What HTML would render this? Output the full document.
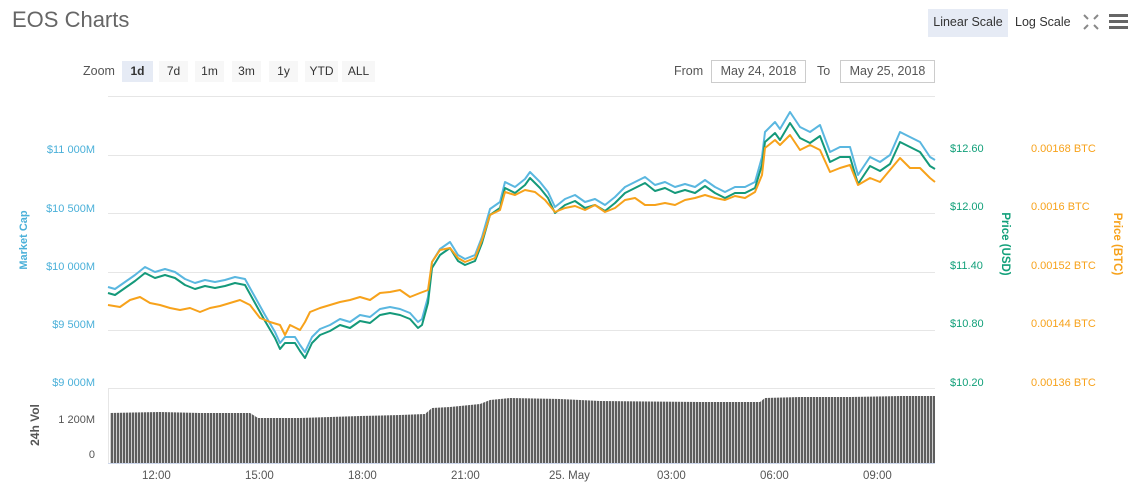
<!DOCTYPE html>
<html><head><meta charset="utf-8"><style>
body{margin:0;width:1141px;height:498px;background:#fff;font-family:"Liberation Sans",sans-serif;position:relative;overflow:hidden}
.a{position:absolute;white-space:nowrap}
.t{font-size:22px;color:#666;left:12px;top:7px}
.btn{position:absolute;top:61px;height:21px;line-height:21px;font-size:12px;color:#333;background:#f7f7f7;text-align:center}
.inp{position:absolute;top:60px;height:21px;border:1px solid #ccc;font-size:12.5px;color:#555;line-height:21px;text-align:center}
.l{font-size:11px;color:#4ab0d9;text-align:right;width:90px;left:5px}
.g{font-size:11px;color:#12a07a;left:950px}
.o{font-size:11px;color:#f7a21b;left:1031px}
.x{font-size:11.5px;color:#555;top:470px}
</style></head><body>
<div class="a t">EOS Charts</div>
<div class="a" style="left:83px;top:64px;font-size:12.5px;color:#555">Zoom</div>
<div class="btn" style="left:122px;width:31px;background:#e6ebf5;font-weight:bold">1d</div>
<div class="btn" style="left:159px;width:29px">7d</div>
<div class="btn" style="left:195px;width:29px">1m</div>
<div class="btn" style="left:232px;width:29px">3m</div>
<div class="btn" style="left:269px;width:29px">1y</div>
<div class="btn" style="left:305px;width:33px">YTD</div>
<div class="btn" style="left:342px;width:33px">ALL</div>
<div class="a" style="left:674px;top:64px;font-size:12.5px;color:#555">From</div>
<div class="inp" style="left:711px;width:93px">May 24, 2018</div>
<div class="a" style="left:817px;top:64px;font-size:12.5px;color:#555">To</div>
<div class="inp" style="left:840px;width:93px">May 25, 2018</div>
<div class="a" style="left:928px;top:9px;width:80px;height:28px;background:#e6ebf5;font-size:12.5px;color:#333;line-height:26px;text-align:center">Linear Scale</div>
<div class="a" style="left:1015px;top:15px;font-size:12.5px;color:#333">Log Scale</div>
<svg class="a" style="left:1082px;top:13px" width="18" height="18" viewBox="0 0 18 18" stroke="#888" stroke-width="2" fill="none"><path d="M2 2l4 4M16 2l-4 4M2 16l4-4M16 16l-4-4"/></svg>
<svg class="a" style="left:1109px;top:13px" width="19" height="17"><rect y="1" width="19" height="3" fill="#666"/><rect y="7" width="19" height="3" fill="#666"/><rect y="13" width="19" height="3" fill="#666"/></svg>

<div class="a l" style="top:144px">$11 000M</div>
<div class="a l" style="top:203px">$10 500M</div>
<div class="a l" style="top:261px">$10 000M</div>
<div class="a l" style="top:319px">$9 500M</div>
<div class="a l" style="top:377px">$9 000M</div>
<div class="a" style="left:-16px;top:234px;transform:rotate(-90deg);font-size:11px;color:#4ab0d9;font-weight:bold;width:80px;text-align:center">Market Cap</div>
<div class="a" style="left:-5px;top:418px;transform:rotate(-90deg);font-size:12px;color:#555;font-weight:bold;width:80px;text-align:center">24h Vol</div>
<div class="a" style="left:5px;width:90px;text-align:right;top:414px;font-size:11px;color:#555">1 200M</div>
<div class="a" style="left:5px;width:90px;text-align:right;top:449px;font-size:11px;color:#555">0</div>

<div class="a g" style="top:143px">$12.60</div>
<div class="a g" style="top:201px">$12.00</div>
<div class="a g" style="top:260px">$11.40</div>
<div class="a g" style="top:318px">$10.80</div>
<div class="a g" style="top:377px">$10.20</div>
<div class="a o" style="top:143px">0.00168 BTC</div>
<div class="a o" style="top:201px">0.0016 BTC</div>
<div class="a o" style="top:260px">0.00152 BTC</div>
<div class="a o" style="top:318px">0.00144 BTC</div>
<div class="a o" style="top:377px">0.00136 BTC</div>
<div class="a" style="left:965px;top:238px;transform:rotate(90deg);font-size:11.5px;color:#12a07a;font-weight:bold;width:80px;text-align:center">Price (USD)</div>
<div class="a" style="left:1077px;top:238px;transform:rotate(90deg);font-size:11.5px;color:#f7a21b;font-weight:bold;width:80px;text-align:center">Price (BTC)</div>

<div class="a x" style="left:142px">12:00</div>
<div class="a x" style="left:245px">15:00</div>
<div class="a x" style="left:348px">18:00</div>
<div class="a x" style="left:451px">21:00</div>
<div class="a x" style="left:549px">25. May</div>
<div class="a x" style="left:657px">03:00</div>
<div class="a x" style="left:760px">06:00</div>
<div class="a x" style="left:863px">09:00</div>

<svg class="a" style="left:0;top:0" width="1141" height="498">
<defs><pattern id="b" width="3" height="10" patternUnits="userSpaceOnUse"><rect width="2.3" height="10" fill="#5e5e5e"/></pattern></defs>
<g stroke="#e6e6e6" stroke-width="1">
<line x1="108" y1="96.5" x2="935" y2="96.5"/>
<line x1="108" y1="155.5" x2="935" y2="155.5"/>
<line x1="108" y1="213.5" x2="935" y2="213.5"/>
<line x1="108" y1="272.5" x2="935" y2="272.5"/>
<line x1="108" y1="330.5" x2="935" y2="330.5"/>
<line x1="108" y1="388.5" x2="935" y2="388.5"/>
<line x1="108.5" y1="388" x2="108.5" y2="463"/>
</g>
<polygon fill="url(#b)" points="110,463 110,413 160,412 200,413 250,413 258,418 300,418 330,417 360,416 400,415 425,414 432,408 450,407 480,404 490,400 510,398 560,399 600,401 700,402 760,402 765,398 800,397 850,397 900,396 935,396 935,463"/>
<line x1="108" y1="463.5" x2="935" y2="463.5" stroke="#ccd6eb"/>
<g fill="none" stroke-width="2" stroke-linejoin="round">
<polyline transform="translate(0,-3)" stroke="#5ab7e0" points="108,290 115,292 125,285 135,278 145,270 155,275 165,272 175,275 185,282 195,286 205,283 215,285 225,283 235,280 245,282 255,300 265,318 275,335 280,346 285,340 295,340 300,348 305,355 312,340 320,332 330,328 340,322 350,325 360,318 370,320 380,312 390,310 400,312 410,316 418,325 422,322 428,300 432,265 440,252 450,245 458,258 465,262 475,258 482,240 490,212 500,205 505,185 515,190 525,182 530,175 540,185 548,195 555,210 565,202 575,198 585,205 595,202 605,208 615,200 625,190 635,185 645,180 655,188 665,185 675,190 685,187 695,190 705,183 715,190 725,195 735,190 745,190 755,185 762,160 765,135 775,125 780,132 790,115 800,130 810,135 820,128 830,155 840,150 850,150 858,178 870,160 880,165 890,158 900,135 910,140 920,145 930,160 935,163"/>
<polyline stroke="#14997a" points="108,293 115,295 125,288 135,281 145,273 155,278 165,275 175,278 185,285 195,289 205,286 215,288 225,286 235,283 245,285 255,303 265,321 275,338 280,349 285,343 295,343 300,351 305,358 312,343 320,335 330,331 340,325 350,328 360,321 370,323 380,315 390,313 400,315 410,319 418,328 422,325 428,303 432,268 440,255 450,248 458,261 465,265 475,261 482,243 490,215 500,208 505,188 515,193 525,185 530,178 540,188 548,198 555,213 565,205 575,201 585,208 595,205 605,211 615,203 625,193 635,188 645,183 655,191 665,188 675,193 685,190 695,193 705,186 715,193 725,198 735,193 745,193 755,188 762,165 765,142 775,133 780,140 790,123 800,138 810,143 820,136 830,162 840,157 850,157 858,184 870,166 880,171 890,164 900,142 910,147 920,152 930,166 935,169"/>
<polyline stroke="#f7a21b" points="108,305 120,307 130,300 140,297 150,303 160,305 170,308 180,310 190,308 200,312 210,308 220,306 230,303 240,300 250,305 260,318 270,322 280,325 285,335 290,325 300,330 305,322 310,312 320,308 330,305 340,302 350,300 360,297 370,300 380,293 390,292 400,290 410,297 420,293 428,290 432,262 440,250 450,248 458,258 465,262 475,258 482,240 490,215 500,210 505,192 515,195 525,190 535,192 545,200 555,212 565,208 575,206 585,210 595,205 605,212 615,208 625,200 635,198 645,205 655,205 665,203 675,205 685,200 695,198 705,195 715,198 725,200 735,196 745,198 755,192 762,175 765,148 775,140 780,145 790,135 800,150 810,145 820,150 830,172 840,168 850,165 858,185 870,178 880,182 890,170 900,158 910,168 920,168 930,178 935,182"/>
</g>
</svg>
</body></html>
